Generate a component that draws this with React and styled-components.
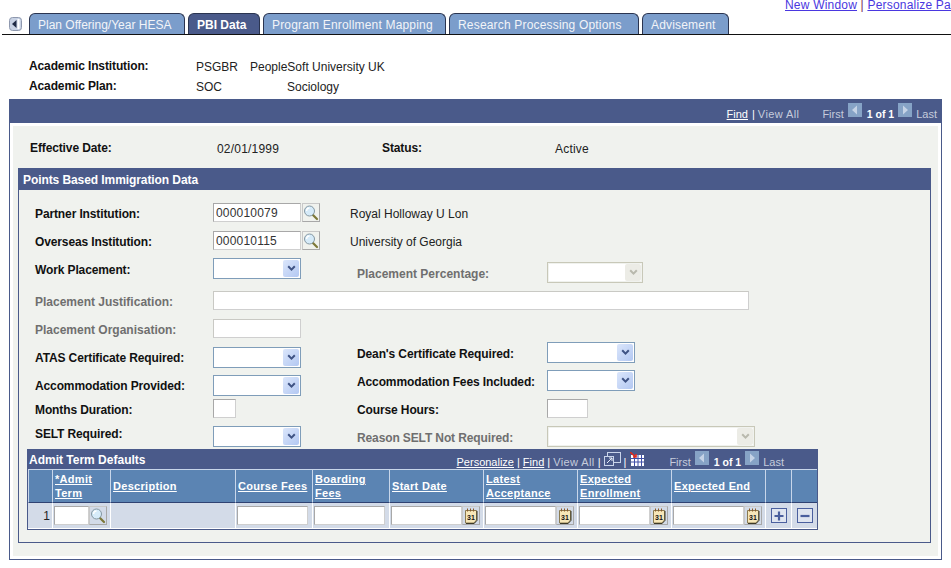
import React from "react";
import styled, { createGlobalStyle } from "styled-components";

const NAVY = "#4a5a8a";
const PAGE = "#f0f2ee";
const FONT = '"Liberation Sans", Arial, sans-serif';

const tabs = [
  { label: "Plan Offering/Year HESA", width: 156, spacing: 0 },
  { label: "PBI Data", width: 72, active: true, spacing: 0 },
  { label: "Program Enrollment Mapping", width: 183, spacing: 0.18 },
  { label: "Research Processing Options", width: 190, spacing: 0.18 },
  { label: "Advisement", width: 87, spacing: 0.18 },
];

const columns = [
  { label: "" },
  { label: "*Admit Term", link: true },
  { label: "Description", link: true },
  { label: "Course Fees", link: true },
  { label: "Boarding Fees", link: true },
  { label: "Start Date", link: true },
  { label: "Latest Acceptance", link: true },
  { label: "Expected Enrollment", link: true },
  { label: "Expected End", link: true },
  { label: "" },
  { label: "" },
];

const LookupIcon = () => (
  <svg width="16" height="17" viewBox="0 0 16 17">
    <path d="M9.5 10.5 L14 15" stroke="#7d7838" strokeWidth="2.2" strokeLinecap="round" />
    <circle cx="6.5" cy="7" r="5" fill="#d6ebf9" stroke="#8497a2" strokeWidth="1" />
    <path d="M3.6 7 A3 3 0 0 1 6.5 4" stroke="#ffffff" strokeWidth="1.3" fill="none" />
  </svg>
);

const CalendarIcon = () => (
  <svg width="14" height="16" viewBox="0 0 14 16">
    <path d="M1.5 2.5 H12.5 V12 L10 15 H1.5 Z" fill="#f7e7b8" stroke="#8a7a50" strokeWidth="1" />
    <path d="M13 3 V12.4 L10.2 15.5 H2" stroke="#3d3a28" strokeWidth="1" fill="none" />
    <path d="M3.5 0.5 V3.5 M6.5 0.5 V3.5 M9.5 0.5 V3.5" stroke="#8a5a2a" strokeWidth="1" />
    <text x="3" y="11.6" fontSize="7" fontWeight="700" fontFamily={FONT} fill="#111111">
      31
    </text>
  </svg>
);

const Chevron = ({ color }) => (
  <svg width="9" height="7" viewBox="0 0 9 7">
    <path d="M1.2 1.2 L4.5 4.6 L7.8 1.2" stroke={color} strokeWidth="2" fill="none" />
  </svg>
);

const Arrow = ({ left, color }) => (
  <svg width="8" height="10" viewBox="0 0 8 10">
    <path d={left ? "M6 0.5 V9.5 L1 5 Z" : "M2 0.5 V9.5 L7 5 Z"} fill={color} />
  </svg>
);

const ScrollBackIcon = () => (
  <svg width="13" height="14" viewBox="0 0 13 14">
    <rect x="0.5" y="0.5" width="12" height="13" rx="3" fill="#c8d2e4" stroke="#8e98ae" />
    <rect x="8.5" y="2" width="2" height="10" fill="#ffffff" />
    <path d="M7.5 3 V11 L3 7 Z" fill="#1f2a44" />
  </svg>
);

const Select = ({ width, disabled }) => (
  <SelectBox $width={width} $disabled={disabled}>
    <SelectButton $disabled={disabled}>
      <Chevron color={disabled ? "#b9b9ad" : "#3f5384"} />
    </SelectButton>
  </SelectBox>
);

const Pager = ({ lead }) => (
  <>
    <Dim $ml={lead}>First</Dim>
    <PageButton $ml={4}>
      <Arrow left color="#c5d3e6" />
    </PageButton>
    <Count $ml={5}>1 of 1</Count>
    <PageButton $ml={4}>
      <Arrow color="#c5d3e6" />
    </PageButton>
    <Dim $ml={4}>Last</Dim>
  </>
);

const CalendarInput = () => (
  <DataCell>
    <TextInput $width={71} readOnly value="" />
    <IconBox>
      <CalendarIcon />
    </IconBox>
  </DataCell>
);

const App = () => {
  return (
    <Page>
      <GlobalStyle />
      <TopLinks>
        <TopLink>New Window</TopLink> | <TopLink>Personalize Page</TopLink>
      </TopLinks>

      <TabBar>
        <ScrollBack>
          <ScrollBackIcon />
        </ScrollBack>
        {tabs.map((tab) => (
          <Tab key={tab.label} $width={tab.width} $active={tab.active} $spacing={tab.spacing}>
            {tab.label}
          </Tab>
        ))}
      </TabBar>

      <Summary>
        <SummaryRow>
          <SummaryLabel>Academic Institution:</SummaryLabel>
          <SummaryValue $width={54}>PSGBR</SummaryValue>
          <SummaryValue>PeopleSoft University UK</SummaryValue>
        </SummaryRow>
        <SummaryRow>
          <SummaryLabel>Academic Plan:</SummaryLabel>
          <SummaryValue $width={91}>SOC</SummaryValue>
          <SummaryValue>Sociology</SummaryValue>
        </SummaryRow>
      </Summary>

      <Panel>
        <PanelBar>
          <NavBar>
            <NavLink>Find</NavLink>
            <Pipe $ml={4}>|</Pipe>
            <ViewAll $ml={3}>View All</ViewAll>
            <Pager lead={23} />
          </NavBar>
        </PanelBar>

        <PanelBody>
          <EffectiveRow>
            <EffectiveLabel $width={187}>Effective Date:</EffectiveLabel>
            <EffectiveValue $width={165}>02/01/1999</EffectiveValue>
            <EffectiveLabel $width={173}>Status:</EffectiveLabel>
            <EffectiveValue>Active</EffectiveValue>
          </EffectiveRow>

          <Section>
            <SectionTitle>Points Based Immigration Data</SectionTitle>
            <Form>
              <FormRow $height={28}>
                <Field>
                  <Label>Partner Institution:</Label>
                  <TextInput $width={88} readOnly value="000010079" />
                  <IconBox $ml={1}>
                    <LookupIcon />
                  </IconBox>
                  <Related>Royal Holloway U Lon</Related>
                </Field>
              </FormRow>
              <FormRow $height={27}>
                <Field>
                  <Label>Overseas Institution:</Label>
                  <TextInput $width={88} readOnly value="000010115" />
                  <IconBox $ml={1}>
                    <LookupIcon />
                  </IconBox>
                  <Related>University of Georgia</Related>
                </Field>
              </FormRow>
              <FormRow $height={33}>
                <Field $width={322}>
                  <Label>Work Placement:</Label>
                  <Select width={88} />
                </Field>
                <Field $top={4}>
                  <Label $right $muted>
                    Placement Percentage:
                  </Label>
                  <Select width={96} disabled />
                </Field>
              </FormRow>
              <FormRow $height={28}>
                <Field>
                  <Label $muted>Placement Justification:</Label>
                  <TextInput $width={536} $soft readOnly value="" />
                </Field>
              </FormRow>
              <FormRow $height={23}>
                <Field>
                  <Label $muted>Placement Organisation:</Label>
                  <TextInput $width={88} $soft readOnly value="" />
                </Field>
              </FormRow>
              <FormRow $height={28}>
                <Field $width={322} $top={5}>
                  <Label $shift={1}>ATAS Certificate Required:</Label>
                  <Select width={88} />
                </Field>
                <Field>
                  <Label $right>Dean's Certificate Required:</Label>
                  <Select width={88} />
                </Field>
              </FormRow>
              <FormRow $height={29}>
                <Field $width={322} $top={5}>
                  <Label $shift={1}>Accommodation Provided:</Label>
                  <Select width={88} />
                </Field>
                <Field>
                  <Label $right>Accommodation Fees Included:</Label>
                  <Select width={88} />
                </Field>
              </FormRow>
              <FormRow $height={27}>
                <Field $width={322}>
                  <Label>Months Duration:</Label>
                  <TextInput $width={23} readOnly value="" />
                </Field>
                <Field>
                  <Label $right>Course Hours:</Label>
                  <TextInput $width={41} readOnly value="" />
                </Field>
              </FormRow>
              <FormRow $height={23}>
                <Field $width={322}>
                  <Label $shift={-5}>SELT Required:</Label>
                  <Select width={88} />
                </Field>
                <Field>
                  <Label $right $muted $tight>
                    Reason SELT Not Required:
                  </Label>
                  <Select width={208} disabled />
                </Field>
              </FormRow>
            </Form>

            <GridBox>
              <GridTitleBar>
                <GridTitle>Admit Term Defaults</GridTitle>
                <NavBar>
                  <NavLink>Personalize</NavLink>
                  <Pipe $ml={3}>|</Pipe>
                  <NavLink $ml={3}>Find</NavLink>
                  <Pipe $ml={3}>|</Pipe>
                  <ViewAll $ml={3}>View All</ViewAll>
                  <Pipe $ml={3}>|</Pipe>
                  <ToolIcon $ml={3}>
                    <svg width="17" height="15" viewBox="0 0 17 15">
                      <rect x="3.5" y="0.5" width="13" height="10" fill="none" stroke="#c9d4ea" />
                      <rect x="0.5" y="4.5" width="9" height="9" fill={NAVY} stroke="#c9d4ea" />
                      <path d="M3 11 L8 6 M5 6 H8 V9" stroke="#e6edf8" fill="none" />
                    </svg>
                  </ToolIcon>
                  <Pipe $ml={3}>|</Pipe>
                  <ToolIcon $ml={4}>
                    <svg width="14" height="14" viewBox="0 0 14 14">
                      <rect x="1" y="3" width="13" height="11" fill="#ffffff" />
                      <path
                        d="M1 6.5 H14 M1 10 H14 M4.5 3 V14 M8 3 V14 M11.5 3 V14"
                        stroke="#3f4fa8"
                        strokeWidth="1"
                      />
                      <path d="M0 0 L5 4.5 M3 5 H6 V2" stroke="#e02a1e" strokeWidth="1.6" fill="none" />
                    </svg>
                  </ToolIcon>
                  <Pager lead={25} />
                </NavBar>
              </GridTitleBar>

              <GridTable>
                {columns.map((col, i) => (
                  <HeadCell key={i}>{col.link && <HeadLink>{col.label}</HeadLink>}</HeadCell>
                ))}

                <RowNumber>1</RowNumber>
                <DataCell>
                  <TextInput $width={35} readOnly value="" />
                  <IconBox>
                    <LookupIcon />
                  </IconBox>
                </DataCell>
                <DataCell />
                <DataCell>
                  <TextInput $width={71} readOnly value="" />
                </DataCell>
                <DataCell>
                  <TextInput $width={71} readOnly value="" />
                </DataCell>
                <CalendarInput />
                <CalendarInput />
                <CalendarInput />
                <CalendarInput />
                <ActionCell>
                  <ActionButton>
                    <svg width="10" height="10" viewBox="0 0 10 10">
                      <path d="M5 0.5 V9.5 M0.5 5 H9.5" stroke="#4a5f9e" strokeWidth="2.2" />
                    </svg>
                  </ActionButton>
                </ActionCell>
                <ActionCell>
                  <ActionButton>
                    <svg width="10" height="10" viewBox="0 0 10 10">
                      <path d="M0.5 5 H9.5" stroke="#4a5f9e" strokeWidth="2.2" />
                    </svg>
                  </ActionButton>
                </ActionCell>
              </GridTable>
            </GridBox>
          </Section>
        </PanelBody>
      </Panel>
    </Page>
  );
};

export default App;

const GlobalStyle = createGlobalStyle`
  html, body {
    margin: 0;
    background: #ffffff;
  }
  body {
    font-family: ${FONT};
    font-size: 12px;
    color: #222222;
  }
`;

const Page = styled.div`
  width: 951px;
  height: 568px;
  overflow: hidden;
`;

const TopLinks = styled.div`
  height: 13px;
  padding-left: 785px;
  line-height: 10px;
  letter-spacing: 0.2px;
  white-space: nowrap;
  color: #7a2a5a;
`;

const TopLink = styled.a`
  color: #4a37e0;
  text-decoration: underline;
`;

const TabBar = styled.div`
  display: flex;
  align-items: flex-end;
  gap: 3px;
  height: 21px;
  margin-left: 2px;
  border-bottom: 1px solid #111111;
`;

const ScrollBack = styled.div`
  display: flex;
  width: 24px;
  height: 17px;
  padding-left: 7px;
  box-sizing: border-box;
`;

const Tab = styled.div`
  box-sizing: border-box;
  width: ${(p) => p.$width}px;
  height: 21px;
  padding-left: 8px;
  line-height: 23px;
  letter-spacing: ${(p) => p.$spacing}px;
  white-space: nowrap;
  color: ${(p) => (p.$active ? "#ffffff" : "#f2f4f8")};
  font-weight: ${(p) => (p.$active ? 700 : 400)};
  background: ${(p) => (p.$active ? NAVY : "#7b9dcb")};
  border: 1px solid #2a3450;
  border-bottom: none;
  border-radius: 6px 6px 0 0;
`;

const Summary = styled.div`
  margin: 21px 0 3px 29px;
`;

const SummaryRow = styled.div`
  display: flex;
  align-items: center;
  height: 20px;
`;

const SummaryLabel = styled.div`
  width: 167px;
  font-weight: 700;
  letter-spacing: -0.12px;
  color: #111111;
`;

const SummaryValue = styled.div`
  width: ${(p) => (p.$width ? `${p.$width}px` : "auto")};
  padding-top: 2px;
`;

const Panel = styled.div`
  width: 933px;
  margin-left: 9px;
  box-sizing: border-box;
  border: 1px solid ${NAVY};
  background: #ffffff;
`;

const PanelBar = styled.div`
  display: flex;
  justify-content: flex-end;
  align-items: flex-end;
  height: 24px;
  margin-top: -1px;
  padding: 0 4px 2px 0;
  box-sizing: border-box;
  background: ${NAVY};
`;

const NavBar = styled.div`
  display: flex;
  align-items: center;
  font-size: 11px;
  line-height: 14px;
  color: #ffffff;
`;

const NavLink = styled.a`
  margin-left: ${(p) => p.$ml || 0}px;
  color: #ffffff;
  text-decoration: underline;
`;

const Pipe = styled.span`
  margin-left: ${(p) => p.$ml || 0}px;
  color: #ffffff;
`;

const Dim = styled.span`
  margin-left: ${(p) => p.$ml || 0}px;
  color: #c6ccdc;
`;

const ViewAll = styled(Dim)`
  letter-spacing: 0.4px;
`;

const Count = styled.span`
  margin-left: ${(p) => p.$ml || 0}px;
  font-size: 10.5px;
  font-weight: 700;
  color: #ffffff;
`;

const PageButton = styled.span`
  display: flex;
  align-items: center;
  justify-content: center;
  width: 14px;
  height: 14px;
  margin-top: -9px;
  margin-left: ${(p) => p.$ml || 0}px;
  background: #86a3c6;
`;

const ToolIcon = styled.span`
  display: flex;
  margin-top: -6px;
  margin-left: ${(p) => p.$ml || 0}px;
`;

const PanelBody = styled.div`
  margin: 3px;
  padding: 0 7px 13px 5px;
  background: ${PAGE};
`;

const EffectiveRow = styled.div`
  display: flex;
  align-items: center;
  box-sizing: border-box;
  height: 42px;
  padding: 2px 0 0 12px;
`;

const EffectiveLabel = styled.div`
  width: ${(p) => p.$width}px;
  font-weight: 700;
  letter-spacing: -0.12px;
  color: #111111;
`;

const EffectiveValue = styled.div`
  width: ${(p) => (p.$width ? `${p.$width}px` : "auto")};
  padding-top: 2px;
  letter-spacing: 0.2px;
`;

const Section = styled.div`
  box-sizing: border-box;
  height: 375px;
  border: 1px solid ${NAVY};
  padding-bottom: 12px;
`;

const SectionTitle = styled.div`
  height: 21px;
  padding-left: 4px;
  line-height: 22px;
  font-weight: 700;
  letter-spacing: -0.08px;
  color: #ffffff;
  background: ${NAVY};
`;

const Form = styled.div`
  display: flex;
  flex-direction: column;
  padding: 13px 0 0 16px;
`;

const FormRow = styled.div`
  display: flex;
  align-items: flex-start;
  height: ${(p) => p.$height}px;
`;

const Field = styled.div`
  display: flex;
  align-items: center;
  width: ${(p) => (p.$width ? `${p.$width}px` : "auto")};
  margin-top: ${(p) => p.$top || 0}px;
`;

const Label = styled.label`
  flex: none;
  width: ${(p) => (p.$right ? 190 : 178)}px;
  font-weight: 700;
  letter-spacing: ${(p) => (p.$muted && !p.$tight ? 0 : -0.12)}px;
  color: ${(p) => (p.$muted ? "#6f6f6f" : "#111111")};
  margin-top: ${(p) => p.$shift ?? 3}px;
`;

const TextInput = styled.input`
  flex: none;
  box-sizing: border-box;
  width: ${(p) => p.$width}px;
  height: 19px;
  margin: 0;
  padding: 0 2px;
  font-family: ${FONT};
  font-size: 12px;
  letter-spacing: 0.2px;
  color: #333333;
  background: #ffffff;
  outline: none;
  border: 1px solid ${(p) => (p.$soft ? "#c9c9c4" : "#a8a8a8")};
  border-right-color: #cfcfcf;
  border-bottom-color: #cfcfcf;
  border-radius: 0;
`;

const IconBox = styled.span`
  flex: none;
  display: flex;
  align-items: center;
  justify-content: center;
  box-sizing: border-box;
  width: 18px;
  height: 19px;
  margin-left: ${(p) => p.$ml || 0}px;
  border: 1px solid #c8c8c8;
  border-right-color: #a8a8a8;
  border-bottom-color: #a8a8a8;
`;

const Related = styled.span`
  margin: 3px 0 0 30px;
`;

const SelectBox = styled.div`
  flex: none;
  display: flex;
  justify-content: flex-end;
  box-sizing: border-box;
  width: ${(p) => p.$width}px;
  height: 21px;
  padding: 1px;
  background: #ffffff;
  border: 1px solid ${(p) => (p.$disabled ? "#c8c8b8" : "#7f9db9")};
  box-shadow: ${(p) => (p.$disabled ? "inset 0 0 0 1px #f0f2ee" : "none")};
`;

const SelectButton = styled.div`
  display: flex;
  align-items: center;
  justify-content: center;
  width: 16px;
  height: 100%;
  border-radius: 2px;
  background: ${(p) =>
    p.$disabled ? "#ecece6" : "linear-gradient(135deg, #dbe6fb, #b3c8f2)"};
`;

const GridBox = styled.div`
  width: 791px;
  margin: 0 0 0 8px;
`;

const GridTitleBar = styled.div`
  display: flex;
  justify-content: space-between;
  align-items: flex-end;
  height: 20px;
  padding: 0 34px 0 2px;
  box-sizing: border-box;
  background: ${NAVY};
`;

const GridTitle = styled.div`
  font-weight: 700;
  color: #ffffff;
  line-height: 18px;
`;

const GridTable = styled.div`
  display: grid;
  grid-template-columns: 24px 58px 125px 77px 77px 94px 94px 94px 94px 26px 26px;
  grid-template-rows: 34px 26px;
  box-sizing: border-box;
  border: 1px solid ${NAVY};
  border-top: none;
  background: ${NAVY};
`;

const HeadCell = styled.div`
  display: flex;
  align-items: center;
  box-sizing: border-box;
  padding: 0 2px;
  border-top: 1px solid #c8d6ea;
  border-left: 1px solid #c8d6ea;
  border-bottom: 1px solid #2f4272;
  background: #5b84b3;
`;

const HeadLink = styled.a`
  font-size: 11px;
  letter-spacing: 0.3px;
  line-height: 14px;
  font-weight: 700;
  color: #ffffff;
  text-decoration: underline;
`;

const DataCell = styled.div`
  display: flex;
  align-items: center;
  box-sizing: border-box;
  padding-left: 1px;
  border-left: 1px solid #ffffff;
  border-bottom: 1px solid #ffffff;
  background: #d3dbe8;
`;

const RowNumber = styled(DataCell)`
  justify-content: flex-end;
  padding: 0 2px 0 0;
  border-left: none;
`;

const ActionCell = styled(DataCell)`
  justify-content: center;
  padding-left: 0;
`;

const ActionButton = styled.span`
  display: flex;
  align-items: center;
  justify-content: center;
  box-sizing: border-box;
  width: 16px;
  height: 15px;
  border: 1px solid #4a5f9e;
  background: #dfe5f0;
`;
